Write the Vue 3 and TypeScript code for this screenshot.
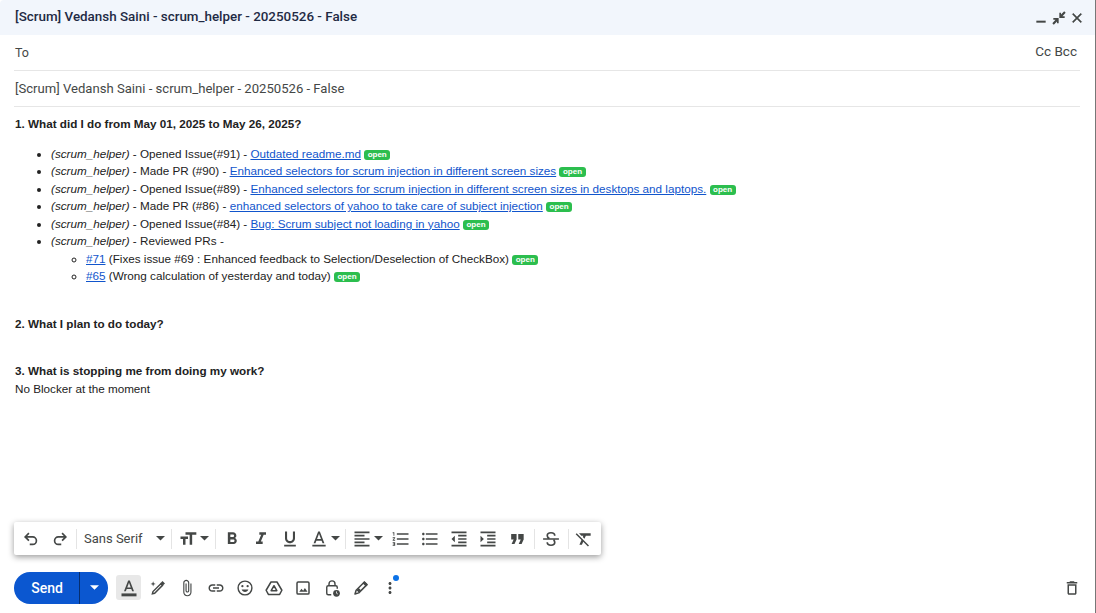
<template>
  <div class="compose">
    <header class="title-bar">
      <span class="title">[Scrum] Vedansh Saini - scrum_helper - 20250526 - False</span>
      <div class="window-actions">
        <svg class="win-icon" viewBox="0 0 24 24"><path d="M5 16h14v3H5z" /></svg>
        <svg class="win-icon" viewBox="0 0 24 24"><path d="M22 4.200 19.800 2 15 6.800V4h-2.500v8H20.500V9.500H17.200L22 4.200zM3.500 12v2.500h3.300L2 19.800 4.200 22 9 17.200V20h2.500v-8z" /></svg>
        <svg class="win-icon" viewBox="0 0 24 24"><path d="M19 6.410 17.590 5 12 10.590 6.410 5 5 6.410 10.590 12 5 17.590 6.410 19 12 13.410 17.590 19 19 17.590 13.410 12z" stroke="#444746" stroke-width="0.700" /></svg>
      </div>
    </header>

    <div class="field to-field">
      <span class="to">To</span>
      <span class="cc">Cc Bcc</span>
    </div>
    <div class="field subject-field">[Scrum] Vedansh Saini - scrum_helper - 20250526 - False</div>

    <main class="body">
      <p class="question">1. What did I do from May 01, 2025 to May 26, 2025?</p>
      <ul class="activity">
        <li v-for="item in activity" :key="item.prefix">
          <i>(scrum_helper)</i> - {{ item.prefix }} - <a href="#">{{ item.title }}</a>{{ ' ' }}<span class="badge">open</span>
        </li>
        <li>
          <i>(scrum_helper)</i> - Reviewed PRs -
          <ul class="reviews">
            <li v-for="pr in reviews" :key="pr.id">
              <a href="#">{{ pr.id }}</a> {{ pr.title }} <span class="badge">open</span>
            </li>
          </ul>
        </li>
      </ul>
      <p class="question second">2. What I plan to do today?</p>
      <p class="question third">3. What is stopping me from doing my work?</p>
      <p class="plain">No Blocker at the moment</p>
    </main>

    <div class="format-bar">
      <template v-for="(tool, i) in formatTools" :key="i">
        <span v-if="tool.kind === 'sep'" class="sep"></span>
        <div v-else-if="tool.kind === 'font'" class="font-select">
          <span>Sans Serif</span>
          <svg class="caret" viewBox="0 0 10 5"><path d="M0 0h10L5 5z" /></svg>
        </div>
        <div v-else class="tool" :class="{ 'with-caret': tool.caret }">
          <svg class="tool-icon" :class="{ outlined: tool.outlined }" viewBox="0 0 24 24"><path :d="tool.d" /></svg>
          <svg v-if="tool.caret" class="caret" viewBox="0 0 10 5"><path d="M0 0h10L5 5z" /></svg>
        </div>
      </template>
    </div>

    <footer class="action-bar">
      <div class="send">
        <span class="send-label">Send</span>
        <span class="send-more"><svg viewBox="0 0 10 5"><path d="M0 0h10L5 5z" /></svg></span>
      </div>
      <span class="text-format">
        <svg viewBox="0 0 24 24"><path d="M11 3 6 16h2.250l1-2.800h5.500l1 2.800H18L13 3h-2zm-1.100 8.400L12 5.600l2.100 5.800H9.900z" /><path d="M3 18.500h18V22H3z" /></svg>
      </span>
      <div class="actions">
        <span v-for="a in actionIcons" :key="a.name" class="action">
          <svg viewBox="0 0 24 24" v-html="a.svg"></svg>
        </span>
        <span class="notify-dot"></span>
      </div>
      <svg class="trash" viewBox="0 0 24 24"><path d="M16 9v10H8V9h8m-1.500-6h-5l-1 1H5v2h14V4h-3.500l-1-1zM18 7H6v12c0 1.100.9 2 2 2h8c1.100 0 2-.9 2-2V7z" /></svg>
    </footer>
  </div>
</template>

<script setup lang="ts">
interface Tool {
  kind?: 'sep' | 'font'
  d?: string
  caret?: boolean
  outlined?: boolean
}

const activity = [
  { prefix: 'Opened Issue(#91)', title: 'Outdated readme.md' },
  { prefix: 'Made PR (#90)', title: 'Enhanced selectors for scrum injection in different screen sizes' },
  { prefix: 'Opened Issue(#89)', title: 'Enhanced selectors for scrum injection in different screen sizes in desktops and laptops.' },
  { prefix: 'Made PR (#86)', title: 'enhanced selectors of yahoo to take care of subject injection' },
  { prefix: 'Opened Issue(#84)', title: 'Bug: Scrum subject not loading in yahoo' },
]

const reviews = [
  { id: '#71', title: '(Fixes issue #69 : Enhanced feedback to Selection/Deselection of CheckBox)' },
  { id: '#65', title: '(Wrong calculation of yesterday and today)' },
]

const formatTools: Tool[] = [
  { outlined: true, d: 'M9.500 5 5 9.500 9.500 14M5.500 9.500H14a4.500 4.500 0 0 1 0 9h-3.500' },
  { outlined: true, d: 'M14.500 5 19 9.500 14.500 14M18.500 9.500H10a4.500 4.500 0 0 0 0 9h3.500' },
  { kind: 'sep' },
  { kind: 'font' },
  { kind: 'sep' },
  { d: 'M9 4v3h5v12h3V7h5V4H9zm-6 8h3v7h3v-7h3V9H3v3z', caret: true },
  { kind: 'sep' },
  { d: 'M15.600 10.790c.97-.67 1.650-1.770 1.650-2.790 0-2.260-1.750-4-4-4H7v14h7.040c2.090 0 3.710-1.700 3.710-3.790 0-1.520-.86-2.820-2.150-3.420zM10 6.500h3c.83 0 1.500.67 1.500 1.500s-.67 1.500-1.500 1.500h-3v-3zm3.500 9H10v-3h3.500c.83 0 1.500.67 1.500 1.500s-.67 1.500-1.500 1.500z' },
  { d: 'M10 4v3h2.210l-3.420 8H6v3h8v-3h-2.210l3.420-8H18V4z' },
  { d: 'M12 17c3.310 0 6-2.690 6-6V3h-2.500v8c0 1.930-1.570 3.500-3.500 3.500S8.500 12.930 8.500 11V3H6v8c0 3.310 2.690 6 6 6zm-7 2v2h14v-2H5z' },
  { d: 'M11 3 5.500 17h2.250l1.120-3h6.250l1.120 3h2.250L13 3h-2zm-1.380 9L12 5.670 14.380 12H9.620zM4 19h16v2H4z', caret: true },
  { kind: 'sep' },
  { d: 'M15 15H3v2h12v-2zm0-8H3v2h12V7zM3 13h18v-2H3v2zm0 8h18v-2H3v2zM3 3v2h18V3H3z', caret: true },
  { d: 'M2 17h2v.5H3v1h1v.5H2v1h3v-4H2v1zm1-9h1V4H2v1h1v3zm-1 3h1.800L2 13.100v.9h3v-1H3.200L5 10.900V10H2v1zm5-6v2h14V5H7zm0 14h14v-2H7v2zm0-6h14v-2H7v2z' },
  { d: 'M4 10.500c-.83 0-1.500.67-1.500 1.500s.67 1.500 1.500 1.500 1.500-.67 1.500-1.500-.67-1.500-1.500-1.500zm0-6c-.83 0-1.500.67-1.500 1.500S3.170 7.500 4 7.500 5.500 6.830 5.500 6 4.830 4.500 4 4.500zm0 12c-.83 0-1.500.68-1.500 1.500s.68 1.500 1.500 1.500 1.500-.68 1.500-1.500-.67-1.500-1.500-1.500zM7 19h14v-2H7v2zm0-6h14v-2H7v2zm0-8v2h14V5H7z' },
  { d: 'M11 17h10v-2H11v2zm-8-5 4 4V8l-4 4zm0 9h18v-2H3v2zM3 3v2h18V3H3zm8 6h10V7H11v2zm0 4h10v-2H11v2z' },
  { d: 'M3 21h18v-2H3v2zM3 8v8l4-4-4-4zm8 9h10v-2H11v2zM3 3v2h18V3H3zm8 6h10V7H11v2zm0 4h10v-2H11v2z' },
  { d: 'M5 6h6.500v6.500L9 18H5.500L8 12.500H5zm8.500 0H20v6.500L17.500 18H14l2.500-5.500h-3z' },
  { kind: 'sep' },
  { outlined: true, d: 'M2.500 12h19M16.500 8c0-2.200-1.900-3.500-4.500-3.500S7.500 5.800 7.500 8c0 1.500 1 2.500 2.500 3.300M7.500 16c0 2.200 1.900 3.500 4.500 3.500s4.500-1.300 4.500-3.500c0-1-.4-2-1.500-2.800' },
  { kind: 'sep' },
  { d: 'M3.270 5 2 6.270l6.970 6.970L6.500 19h3l1.570-3.660L16.730 21 18 19.730 3.550 5.270 3.270 5zM6 5v.18L8.820 8h2.400l-.72 1.680 2.100 2.100L14.210 8H20V5H6z' },
]

const actionIcons = [
  {
    name: 'assist',
    svg: '<path d="M18 8.500 7.500 19l-3 .8.8-3L15.800 6.300z" fill="none" stroke="#444746" stroke-width="1.900"/><path d="M15.200 5.500 18 2.700l3.300 3.300-2.800 2.800zM5.500 3l.9 2.600L9 6.500l-2.600.9L5.500 10l-.9-2.600L2 6.500l2.600-.9z"/>',
  },
  {
    name: 'attach',
    svg: '<path d="M16.500 6v11.500c0 2.210-1.790 4-4 4s-4-1.790-4-4V5c0-1.380 1.120-2.500 2.500-2.500s2.500 1.120 2.500 2.500v10.500c0 .55-.45 1-1 1s-1-.45-1-1V6H10v9.500c0 1.380 1.120 2.500 2.500 2.500s2.500-1.120 2.500-2.500V5c0-2.210-1.790-4-4-4S7 2.790 7 5v12.500c0 3.040 2.460 5.500 5.500 5.500s5.500-2.460 5.500-5.500V6h-1.500z"/>',
  },
  {
    name: 'link',
    svg: '<path d="M3.900 12c0-1.710 1.390-3.100 3.100-3.100h4V7H7c-2.760 0-5 2.240-5 5s2.240 5 5 5h4v-1.900H7c-1.710 0-3.100-1.390-3.100-3.100zM8 13h8v-2H8v2zm9-6h-4v1.900h4c1.710 0 3.100 1.390 3.100 3.100s-1.390 3.100-3.100 3.100h-4V17h4c2.760 0 5-2.240 5-5s-2.240-5-5-5z"/>',
  },
  {
    name: 'emoji',
    svg: '<circle cx="12" cy="12" r="9.200" fill="none" stroke="#444746" stroke-width="1.900"/><circle cx="8.500" cy="9.500" r="1.500"/><circle cx="15.500" cy="9.500" r="1.500"/><path d="M7.500 14h9c-.7 2-2.400 3.400-4.500 3.400S8.200 16 7.500 14z"/>',
  },
  {
    name: 'drive',
    svg: '<path d="M8 4h8l6.500 11-3 5.500h-15l-3-5.500z" fill="none" stroke="#444746" stroke-width="2" stroke-linejoin="round"/><path d="M12 9l3.800 6.500H8.200z" fill="none" stroke="#444746" stroke-width="2" stroke-linejoin="round"/>',
  },
  {
    name: 'photo',
    svg: '<rect x="4" y="4" width="16" height="16" rx="1.500" fill="none" stroke="#444746" stroke-width="2"/><path d="M7 17l3-4 2.200 2.500 2.300-3.500 3.500 5z"/>',
  },
  {
    name: 'confidential',
    svg: '<path d="M11 21H7a2 2 0 0 1-2-2v-8a2 2 0 0 1 2-2h10a2 2 0 0 1 2 2v2M8 9V6.500a4 4 0 0 1 8 0V9" fill="none" stroke="#444746" stroke-width="1.900"/><circle cx="18" cy="19" r="4.500"/><path d="M18 16.500V19l1.800 1" fill="none" stroke="#fff" stroke-width="1"/>',
  },
  {
    name: 'signature',
    svg: '<path d="M16.500 4l3.500 3.500L9 18.500l-5 1.500 1.500-5z" fill="none" stroke="#444746" stroke-width="2" stroke-linejoin="round"/><path d="M14 5.500 18.500 10 21 7.500 16.500 3zM9 12l3 3-3 3-3-3z"/>',
  },
  {
    name: 'more',
    svg: '<path d="M12 8c1.100 0 2-.9 2-2s-.9-2-2-2-2 .9-2 2 .9 2 2 2zm0 2c-1.100 0-2 .9-2 2s.9 2 2 2 2-.9 2-2-.9-2-2-2zm0 6c-1.100 0-2 .9-2 2s.9 2 2 2 2-.9 2-2-.9-2-2-2z"/>',
  },
]
</script>

<style>
html,
body {
  margin: 0;
  background: #fff;
}
</style>

<style scoped>
.compose {
  height: 613px;
  display: flex;
  flex-direction: column;
  background: #fff;
  box-sizing: border-box;
  border-right: 1px solid #777;
  font-family: 'Liberation Sans', Arial, sans-serif;
  color: #222;
  overflow: hidden;
}

.title-bar {
  flex: 0 0 35px;
  display: flex;
  align-items: center;
  justify-content: space-between;
  padding: 0 10px 3px 15px;
  box-sizing: border-box;
  background: #f2f6fc;
  border-top-left-radius: 4px;
}

.title {
  font: 500 13.400px Roboto, sans-serif;
  color: #1f2a44;
}

.window-actions {
  display: flex;
  gap: 2px;
  margin-top: 3px;
}

.win-icon {
  width: 16px;
  height: 16px;
  fill: #444746;
}

.field {
  margin: 0 15px 0 14px;
  box-sizing: border-box;
  border-bottom: 1px solid #e6e6e6;
  font: 400 13.100px Roboto, sans-serif;
  color: #444746;
  padding-left: 1px;
}

.to-field {
  height: 36px;
  display: flex;
  align-items: center;
  justify-content: space-between;
  padding-right: 3px;
}

.to {
  font-size: 12.500px;
}

.cc {
  font-size: 13.500px;
  margin-bottom: 3px;
}

.subject-field {
  height: 36px;
  line-height: 35px;
}

.body {
  flex: 1;
  padding: 8px 15px 0;
  font-size: 11.700px;
  line-height: 17.500px;
  color: #222;
}

.question {
  margin: 0;
  font-weight: 700;
}

.second {
  margin-top: 30px;
}

.third {
  margin-top: 30px;
}

.plain {
  margin: 0;
}

ul {
  margin: 0;
  padding: 0;
}

.activity {
  margin-top: 12px;
  padding-left: 36px;
}

.reviews {
  padding-left: 35px;
  list-style: circle;
}

a {
  color: #15c;
  text-decoration: underline;
}

.badge {
  display: inline-block;
  padding: 0 3.500px;
  height: 10px;
  line-height: 9px;
  vertical-align: 1px;
  border-radius: 3px;
  background: #2cbe4e;
  color: #fff;
  font-size: 8px;
  font-weight: 700;
}

.format-bar {
  align-self: flex-start;
  margin-left: 14px;
  width: 587px;
  height: 33px;
  box-sizing: border-box;
  display: flex;
  align-items: center;
  padding-left: 2px;
  background: #fff;
  border-radius: 2px;
  box-shadow: 0 2px 6px rgba(0, 0, 0, 0.4);
}

.sep {
  flex: 0 0 1px;
  height: 20px;
  background: #e4e4e4;
  margin: 0 2px;
}

.tool {
  flex: 0 0 29px;
  height: 28px;
  display: flex;
  align-items: center;
  justify-content: center;
}

.tool:last-child {
  margin-left: -1px;
}

.tool.with-caret {
  flex-basis: 38.500px;
  gap: 2px;
  justify-content: flex-start;
  padding-left: 4px;
  box-sizing: border-box;
}

.tool-icon {
  width: 20px;
  height: 20px;
  flex: none;
  fill: #444746;
}

.tool-icon.outlined {
  fill: none;
  stroke: #444746;
  stroke-width: 2;
}

.font-select {
  width: 90px;
  display: flex;
  align-items: center;
  justify-content: space-between;
  box-sizing: border-box;
  padding: 0 4px 0 5px;
  font: 400 13px Roboto, sans-serif;
  color: #444746;
}

.caret {
  width: 9px;
  height: 4.500px;
  fill: #444746;
}

.action-bar {
  flex: 0 0 58px;
  display: flex;
  align-items: center;
  padding: 7px 14px 0 14px;
  box-sizing: border-box;
}

.send {
  width: 94px;
  height: 32px;
  display: flex;
  border-radius: 16px;
  background: #0b57d0;
  color: #fff;
  overflow: hidden;
  font: 500 14px Roboto, sans-serif;
}

.send-label {
  width: 66px;
  text-align: center;
  line-height: 32px;
  border-right: 1px solid #062e6f;
  padding-left: 1px;
  box-sizing: border-box;
}

.send-more {
  flex: 1;
  display: flex;
  align-items: center;
  justify-content: center;
}

.send-more svg {
  width: 9px;
  height: 5px;
  fill: #fff;
}

.text-format {
  width: 25px;
  height: 25px;
  margin-left: 8px;
  border-radius: 3px;
  background: #e8e8e8;
  display: flex;
  align-items: center;
  justify-content: center;
}

.text-format svg {
  width: 20px;
  height: 20px;
  fill: #444746;
}

.actions {
  position: relative;
  display: flex;
  margin-left: 2px;
}

.action {
  width: 29px;
  height: 29px;
  display: flex;
  align-items: center;
  justify-content: center;
}

.action svg {
  width: 18px;
  height: 18px;
  fill: #444746;
}

.notify-dot {
  position: absolute;
  left: 250px;
  top: 2px;
  width: 6px;
  height: 6px;
  border-radius: 50%;
  background: #0b72e7;
}

.trash {
  width: 18px;
  height: 18px;
  margin-left: auto;
  fill: #444746;
}
</style>
